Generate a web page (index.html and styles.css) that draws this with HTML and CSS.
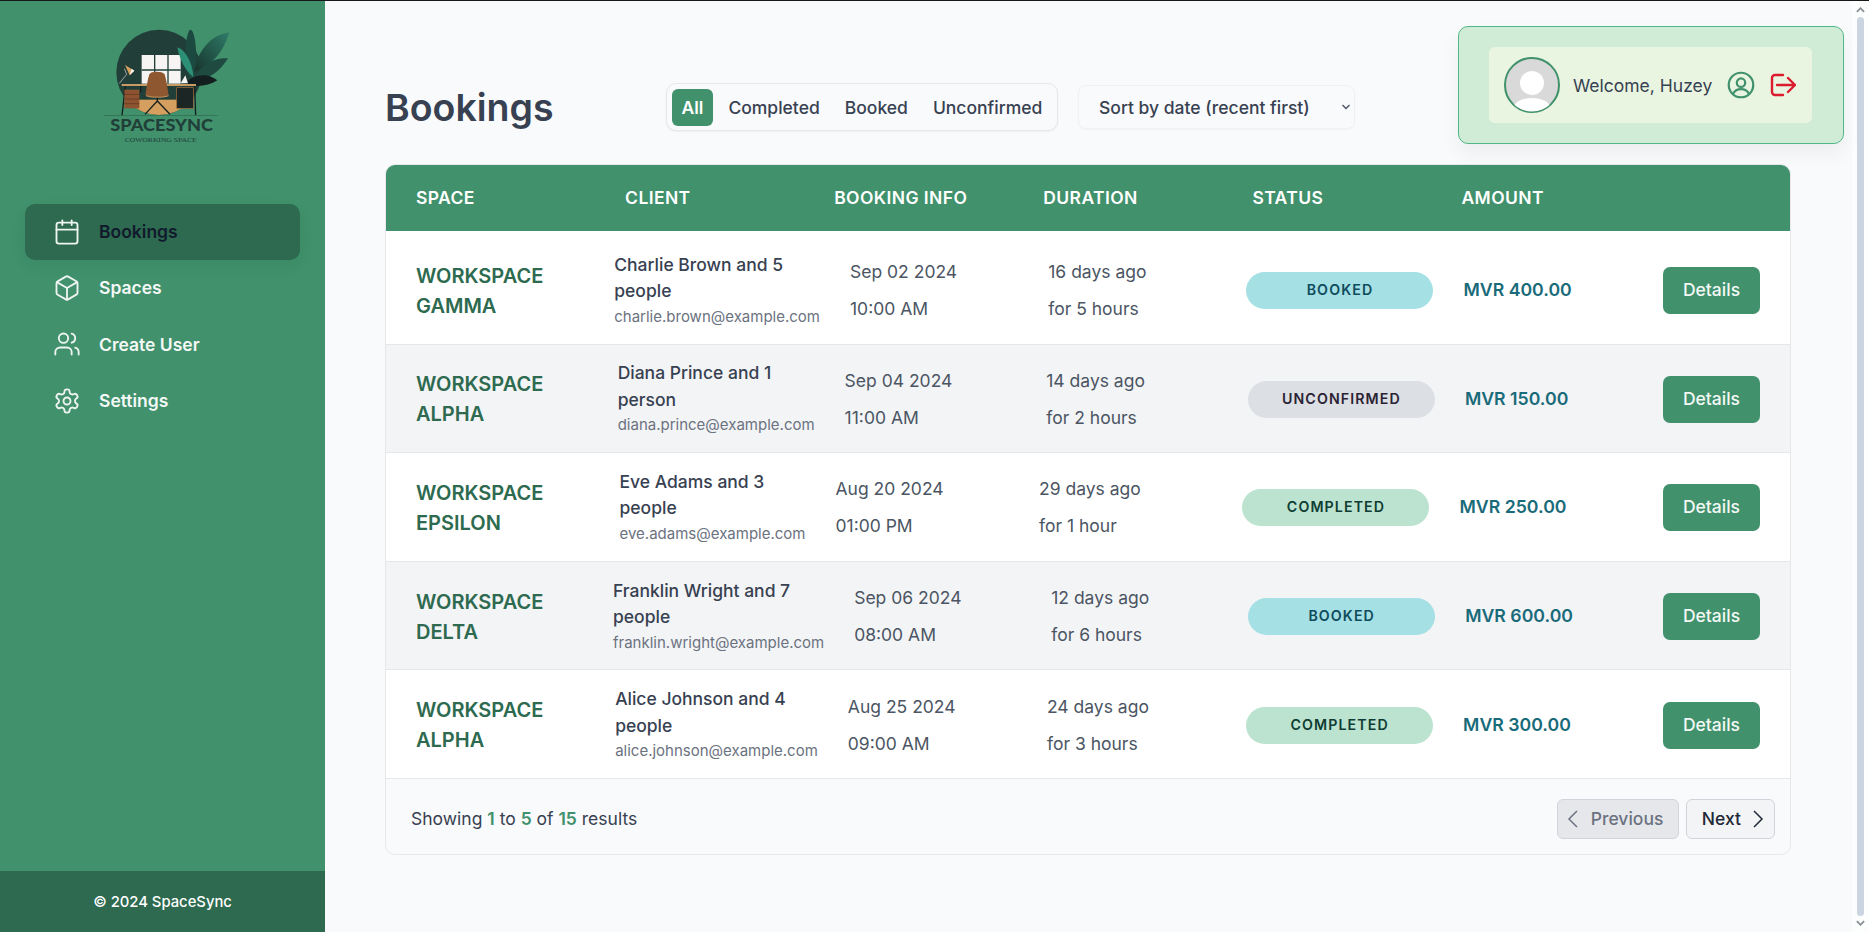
FILE: index.html
```html
<!DOCTYPE html>
<html lang="en">
<head>
<meta charset="utf-8">
<title>SpaceSync Bookings</title>
<link rel="stylesheet" href="styles.css">
</head>
<body>
<div class="app">
  <aside class="sidebar">
    <div class="logo-wrap">
      <svg class="logo" viewBox="0 0 450 405" aria-label="SpaceSync logo">
        <defs>
          <clipPath id="disc"><circle cx="207" cy="172" r="128"/></clipPath>
          <linearGradient id="leaf" x1="0" y1="1" x2="1" y2="0"><stop offset="0" stop-color="#17332c"/><stop offset="1" stop-color="#2f7c68"/></linearGradient>
        </defs>
        <circle cx="207" cy="172" r="128" fill="#213f38"/>
        <g clip-path="url(#disc)">
          <rect x="110" y="254" width="200" height="50" fill="#d5a05f"/>
        </g>
        <rect x="155" y="120" width="117" height="86" fill="#f6f5f3"/>
        <path d="M194 120v86M234 120v86M155 165h117" stroke="#213f38" stroke-width="4" fill="none"/>
        <path d="M307 210C285 170 280 90 296 50c2-8 8-8 12 0 14 30 14 110 2 160z" fill="#1c4a41"/>
        <path d="M312 170C322 110 360 60 418 52 400 110 370 150 312 170z" fill="url(#leaf)"/>
        <path d="M310 200c16-50 60-72 104-70-22 36-56 64-104 70z" fill="#1f4a40"/>
        <path d="M310 186C286 170 268 130 262 97c26 8 46 50 48 89z" fill="#2c9077"/>
        <path d="M284 206c26-30 70-34 98-10-28 18-66 22-98 10z" fill="#121f1e"/>
        <path d="M272 205l14-24 8 24z" fill="#f6f5f3"/>
        <rect x="95" y="207" width="223" height="6" fill="#c99a63"/>
        <path d="M106 213l-10 88M314 213l3 88M152 213v20" stroke="#15201e" stroke-width="4" fill="none"/>
        <rect x="103" y="224" width="45" height="56" fill="#8e5330"/>
        <path d="M103 238h45M103 252h45M103 266h45" stroke="#5d351f" stroke-width="2"/>
        <rect x="260" y="218" width="50" height="62" fill="#1c2624" stroke="#a86c3d" stroke-width="2"/>
        <path d="M178 178c4-10 40-10 46 0 6 18 8 44 12 62-20 8-54 8-70 0 4-20 6-44 12-62z" fill="#8e5730"/>
        <path d="M168 240c20 6 48 6 68 0v4c-20 6-48 6-68 0z" fill="#c08a56"/>
        <path d="M202 248v10M202 258l-37 40M202 258l38 40" stroke="#15201e" stroke-width="4" fill="none"/>
        <path d="M88 205l22-27-7-17" stroke="#dcd8cf" stroke-width="2" fill="none"/>
        <path d="M105 150l28 17-14 14z" fill="#d9a05e"/>
        <path d="M125 161l8 6-14 14 2-6z" fill="#f6f5f3"/>
        <rect x="42" y="300" width="341" height="2" fill="#2d6a4f"/>
        <text x="61" y="348" class="logo-title" textLength="308" lengthAdjust="spacingAndGlyphs">SPACESYNC</text>
        <text x="104" y="380" class="logo-sub" textLength="216" lengthAdjust="spacingAndGlyphs">COWORKING SPACE</text>
      </svg>
    </div>
    <nav class="nav">
      <a class="nav-item active">
        <svg class="nav-icon" viewBox="0 0 24 24"><rect x="3" y="4" width="18" height="18" rx="2"/><path d="M16 2v4M8 2v4M3 10h18"/></svg>
        <span>Bookings</span>
      </a>
      <a class="nav-item">
        <svg class="nav-icon" viewBox="0 0 24 24"><path d="M21 8a2 2 0 0 0-1-1.73l-7-4a2 2 0 0 0-2 0l-7 4A2 2 0 0 0 3 8v8a2 2 0 0 0 1 1.73l7 4a2 2 0 0 0 2 0l7-4A2 2 0 0 0 21 16Z"/><path d="m3.3 7 8.7 5 8.7-5"/><path d="M12 22V12"/></svg>
        <span>Spaces</span>
      </a>
      <a class="nav-item">
        <svg class="nav-icon" viewBox="0 0 24 24"><path d="M16 21v-2a4 4 0 0 0-4-4H6a4 4 0 0 0-4 4v2"/><circle cx="9" cy="7" r="4"/><path d="M22 21v-2a4 4 0 0 0-3-3.87"/><path d="M16 3.13a4 4 0 0 1 0 7.75"/></svg>
        <span>Create User</span>
      </a>
      <a class="nav-item">
        <svg class="nav-icon" viewBox="0 0 24 24"><path d="M12.22 2h-.44a2 2 0 0 0-2 2v.18a2 2 0 0 1-1 1.73l-.43.25a2 2 0 0 1-2 0l-.15-.08a2 2 0 0 0-2.73.73l-.22.38a2 2 0 0 0 .73 2.73l.15.1a2 2 0 0 1 1 1.72v.51a2 2 0 0 1-1 1.74l-.15.09a2 2 0 0 0-.73 2.73l.22.38a2 2 0 0 0 2.73.73l.15-.08a2 2 0 0 1 2 0l.43.25a2 2 0 0 1 1 1.73V20a2 2 0 0 0 2 2h.44a2 2 0 0 0 2-2v-.18a2 2 0 0 1 1-1.73l.43-.25a2 2 0 0 1 2 0l.15.08a2 2 0 0 0 2.73-.73l.22-.39a2 2 0 0 0-.73-2.73l-.15-.08a2 2 0 0 1-1-1.74v-.5a2 2 0 0 1 1-1.74l.15-.09a2 2 0 0 0 .73-2.73l-.22-.38a2 2 0 0 0-2.73-.73l-.15.08a2 2 0 0 1-2 0l-.43-.25a2 2 0 0 1-1-1.73V4a2 2 0 0 0-2-2z"/><circle cx="12" cy="12" r="3"/></svg>
        <span>Settings</span>
      </a>
    </nav>
    <footer class="side-footer">© 2024 SpaceSync</footer>
  </aside>

  <main class="main">
    <div class="toolbar">
      <h1 class="title">Bookings</h1>
      <div class="filters">
        <button class="filter on">All</button>
        <button class="filter">Completed</button>
        <button class="filter">Booked</button>
        <button class="filter">Unconfirmed</button>
      </div>
      <div class="sort-wrap">
        <select class="sort">
          <option>Sort by date (recent first)</option>
        </select>
        <svg class="sort-chev" viewBox="0 0 10 6"><path d="M1.500 1 5 4.500 8.500 1"/></svg>
      </div>
    </div>

    <section class="table">
      <div class="thead">
        <span>SPACE</span><span>CLIENT</span><span>BOOKING INFO</span><span>DURATION</span><span>STATUS</span><span>AMOUNT</span>
      </div>
      <div class="tbody">
        <div class="row">
          <div class="space">WORKSPACE GAMMA</div>
          <div class="group">
            <div class="client"><div class="name">Charlie Brown and 5 people</div><div class="email">charlie.brown@example.com</div></div>
            <div class="info"><div>Sep 02 2024</div><div>10:00 AM</div></div>
          </div>
          <div class="dur"><div>16 days ago</div><div>for 5 hours</div></div>
          <div class="group">
            <div class="pill booked">BOOKED</div>
            <div class="amount">MVR 400.00</div>
          </div>
          <button class="details">Details</button>
        </div>
        <div class="row alt">
          <div class="space">WORKSPACE ALPHA</div>
          <div class="group">
            <div class="client"><div class="name">Diana Prince and 1 person</div><div class="email">diana.prince@example.com</div></div>
            <div class="info"><div>Sep 04 2024</div><div>11:00 AM</div></div>
          </div>
          <div class="dur"><div>14 days ago</div><div>for 2 hours</div></div>
          <div class="group">
            <div class="pill unconfirmed">UNCONFIRMED</div>
            <div class="amount">MVR 150.00</div>
          </div>
          <button class="details">Details</button>
        </div>
        <div class="row">
          <div class="space">WORKSPACE EPSILON</div>
          <div class="group">
            <div class="client"><div class="name">Eve Adams and 3 people</div><div class="email">eve.adams@example.com</div></div>
            <div class="info"><div>Aug 20 2024</div><div>01:00 PM</div></div>
          </div>
          <div class="dur"><div>29 days ago</div><div>for 1 hour</div></div>
          <div class="group">
            <div class="pill completed">COMPLETED</div>
            <div class="amount">MVR 250.00</div>
          </div>
          <button class="details">Details</button>
        </div>
        <div class="row alt">
          <div class="space">WORKSPACE DELTA</div>
          <div class="group">
            <div class="client"><div class="name">Franklin Wright and 7 people</div><div class="email">franklin.wright@example.com</div></div>
            <div class="info"><div>Sep 06 2024</div><div>08:00 AM</div></div>
          </div>
          <div class="dur"><div>12 days ago</div><div>for 6 hours</div></div>
          <div class="group">
            <div class="pill booked">BOOKED</div>
            <div class="amount">MVR 600.00</div>
          </div>
          <button class="details">Details</button>
        </div>
        <div class="row">
          <div class="space">WORKSPACE ALPHA</div>
          <div class="group">
            <div class="client"><div class="name">Alice Johnson and 4 people</div><div class="email">alice.johnson@example.com</div></div>
            <div class="info"><div>Aug 25 2024</div><div>09:00 AM</div></div>
          </div>
          <div class="dur"><div>24 days ago</div><div>for 3 hours</div></div>
          <div class="group">
            <div class="pill completed">COMPLETED</div>
            <div class="amount">MVR 300.00</div>
          </div>
          <button class="details">Details</button>
        </div>
      </div>
      <div class="tfoot">
        <div class="count">Showing <b>1</b> to <b>5</b> of <b>15</b> results</div>
        <div class="pager">
          <button class="page-btn prev disabled"><svg class="chev" viewBox="0 0 24 24"><path d="M15 4l-8 8 8 8"/></svg>Previous</button>
          <button class="page-btn next">Next<svg class="chev" viewBox="0 0 24 24"><path d="M9 4l8 8-8 8"/></svg></button>
        </div>
      </div>
    </section>

    <div class="user-card">
      <div class="user-inner">
        <svg class="avatar" viewBox="0 0 56 56"><defs><clipPath id="av"><circle cx="28" cy="28" r="26.5"/></clipPath></defs><circle cx="28" cy="28" r="27" fill="#d9d9d9" stroke="#40916c" stroke-width="2"/><g clip-path="url(#av)"><circle cx="28" cy="26" r="12" fill="#fff"/><ellipse cx="28" cy="52" rx="19" ry="11" fill="#fff"/></g></svg>
        <span class="welcome">Welcome, Huzey</span>
        <svg class="user-icon profile" viewBox="0 0 24 24"><circle cx="12" cy="12" r="10.500"/><circle cx="12" cy="10" r="3.600"/><path d="M5.200 19.500c1.500-3 4-4 6.800-4s5.300 1 6.800 4"/></svg>
        <svg class="user-icon logout" viewBox="0 0 26 24"><path d="M13 2H5a3 3 0 0 0-3 3v14a3 3 0 0 0 3 3h8"/><path d="M7 12h18M18 5l7 7-7 7"/></svg>
      </div>
    </div>
  </main>

  <div class="scrollbar">
    <svg class="sb-arrow" viewBox="0 0 10 6"><path d="M1 5l4-4 4 4"/></svg>
    <div class="sb-thumb"></div>
    <svg class="sb-arrow" viewBox="0 0 10 6"><path d="M1 1l4 4 4-4"/></svg>
  </div>
</div>
</body>
</html>
```
FILE: styles.css
```css
* { box-sizing: border-box; }
html, body { margin: 0; height: 100%; overflow: hidden; }
body {
  font-family: Inter, "Liberation Sans", sans-serif;
  color: #1f2937;
  background: #f9fafb;
  border-top: 1px solid #16181c;
}
button, select { font-family: inherit; }

.app { display: flex; height: 931px; }

/* sidebar */
.sidebar {
  width: 325px;
  flex: none;
  background: #40916c;
  display: flex;
  flex-direction: column;
}
.logo-wrap { padding: 14px 0 0 90px; height: 203px; }
.logo { display: block; width: 150px; height: 135px; }
.logo-title { font-family: Lato, sans-serif; font-weight: 900; font-size: 50px; fill: #213f38; }
.logo-sub { font-family: "Liberation Serif", serif; font-size: 20px; fill: #213f38; }

.nav { flex: 1; padding: 0 25px; display: flex; flex-direction: column; }
.nav-item {
  display: flex;
  align-items: center;
  gap: 18px;
  height: 56.3px;
  padding: 0 0 1px 28px;
  border-radius: 10px;
  font-size: 17.5px;
  font-weight: 600;
  color: #f4f8f6;
}
.nav-item.active {
  background: #2d6a4f;
  color: #111a2c;
  box-shadow: 0 6px 16px rgba(0, 0, 0, .06);
}
.nav-icon { width: 28px; height: 28px; fill: none; stroke: #eef4f1; stroke-width: 1.6; stroke-linecap: round; stroke-linejoin: round; }
.side-footer {
  height: 61px;
  background: #2d6a4f;
  color: #fff;
  font-size: 14.8px;
  font-weight: 500;
  display: flex;
  align-items: center;
  justify-content: center;
}

/* main */
.main { flex: 1; position: relative; padding: 82px 61px 0 60px; background: #f9fafb; }
.toolbar { display: flex; align-items: center; height: 48px; margin-bottom: 33px; }
.title { margin: 0; width: 281px; font-size: 37.5px; font-weight: 600; color: #374151; }
.filters {
  display: flex;
  align-items: center;
  gap: 0;
  height: 48px;
  padding: 0 5px;
  width: 392px;
  background: #f9fafb;
  border: 1px solid #e5e7eb;
  border-radius: 10px;
  box-shadow: 0 1px 2px rgba(0,0,0,.05);
}
.filter {
  border: 0;
  background: none;
  height: 37px;
  padding: 0 12.500px;
  border-radius: 6px;
  font-size: 17.5px;
  font-weight: 450;
  color: #374151;
}
.filter.on { background: #40916c; color: #fff; padding: 0 9.500px; margin-right: 3px; font-weight: 600; }
.sort-wrap { position: relative; margin-left: 20px; }
.sort {
  display: block;
  appearance: none;
  width: 277px;
  height: 44px;
  padding: 0 0 0 20px;
  border: 1px solid #f0f1f4;
  border-radius: 8px;
  background: #f9fafb;
  font-size: 17.5px;
  font-weight: 450;
  color: #374151;
  box-shadow: 0 1px 2px rgba(0,0,0,.03);
}
.sort-chev {
  position: absolute;
  right: 4px;
  top: 19px;
  width: 10px;
  height: 6px;
  fill: none;
  stroke: #4b5563;
  stroke-width: 1.4;
}

/* table */
.table {
  border: 1px solid #e5e7eb;
  border-radius: 10px;
  overflow: hidden;
}
.thead {
  height: 66px;
  background: #40916c;
  color: #fff;
  font-size: 17.5px;
  font-weight: 600;
  letter-spacing: .4px;
  display: grid;
  grid-template-columns: repeat(6, 209.100px);
  align-items: center;
  padding: 0 30px 2px;
}
.tbody { background: #fff; padding-top: 5px; }
.row {
  height: 108.600px;
  padding: 2px 30px 0;
  display: flex;
  align-items: center;
  justify-content: space-between;
  border-bottom: 1px solid #e5e7eb;
  background: #fff;
  font-size: 17.5px;
  color: #4b5563;
}
.row.alt { background: #f3f4f6; }
.group { display: flex; align-items: center; gap: 30px; }
.space { width: 107px; font-size: 20px; font-weight: 600; color: #2d6a4f; line-height: 30px; word-break: keep-all; }
.client { width: min-content; margin-top: -1px; }
.name { font-size: 17.5px; font-weight: 450; color: #374151; line-height: 26.5px; }
.email { font-size: 15px; color: #6b7280; line-height: 24px; }
.info { width: 107px; margin-top: -1px; line-height: 37px; white-space: nowrap; }
.dur { width: 107px; margin-top: -1px; line-height: 37px; white-space: nowrap; }
.pill {
  width: 187px;
  height: 37px;
  padding-bottom: 2px;
  border-radius: 19px;
  display: flex;
  align-items: center;
  justify-content: center;
  font-size: 14.2px;
  font-weight: 600;
  letter-spacing: 1.100px;
  flex: none;
}
.booked { background: #a5e0e5; color: #0f4c5c; }
.completed { background: #bce3cf; color: #0f3d33; }
.unconfirmed { background: #dcdfe3; color: #2b2233; }
.amount { margin-top: -2px; font-size: 17.7px; font-weight: 600; color: #1a6b7a; white-space: nowrap; }
.details {
  width: 97px;
  height: 47px;
  padding: 0 0 2px;
  border: 0;
  border-radius: 7px;
  background: #40916c;
  color: #f3f8f5;
  font-size: 17.5px;
  font-weight: 500;
  flex: none;
}
.tfoot {
  height: 75px;
  display: flex;
  align-items: center;
  justify-content: space-between;
  padding: 5px 15px 0 25px;
  background: #f9fafb;
}
.count { font-size: 17.5px; color: #374151; }
.count b { font-weight: 600; color: #40916c; }
.pager { display: flex; gap: 7px; }
.page-btn {
  height: 40px;
  display: flex;
  align-items: center;
  border: 1px solid #d1d5db;
  border-radius: 6px;
  background: #f3f4f6;
  color: #1f2937;
  font-size: 17.5px;
  font-weight: 450;
}
.prev { gap: 5px; padding: 0 14.500px 0 4px; }
.next { gap: 4px; padding: 0 5px 0 15px; }
.page-btn.disabled { background: #e5e7eb; color: #6b7280; }
.chev { width: 24px; height: 24px; fill: none; stroke: currentColor; stroke-width: 1.5; }

/* user card overlay */
.user-card {
  position: absolute;
  top: 25px;
  left: 1133px;
  width: 386px;
  height: 118px;
  padding: 20px 31px 20px 30px;
  background: #d0ecd6;
  border: 1px solid #52b788;
  border-radius: 10px;
  box-shadow: 0 10px 20px rgba(0, 0, 0, .05);
}
.user-inner {
  height: 76px;
  display: flex;
  align-items: center;
  padding-left: 15px;
  background: #e9f5e1;
  border-radius: 6px;
}
.avatar { width: 56px; height: 56px; flex: none; }
.welcome { margin-left: 13px; width: 154px; font-size: 17.5px; color: #374151; }
.user-icon { fill: none; stroke-linecap: round; stroke-linejoin: round; flex: none; }
.profile { width: 28px; height: 28px; stroke-width: 1.9; stroke: #40916c; }
.logout { width: 26px; height: 24px; margin-left: 15px; stroke-width: 2.4; stroke: #dc1c2e; }

/* scrollbar */
.scrollbar {
  width: 17px;
  flex: none;
  background: #fcfdfd;
  display: flex;
  flex-direction: column;
  align-items: center;
  padding: 6px 0;
  gap: 4px;
}
.sb-arrow { width: 9px; height: 6px; flex: none; fill: none; stroke: #8a8f96; stroke-width: 2; }
.sb-thumb { flex: 1; width: 7px; background: #cbd5e1; border-radius: 4px; }
```
